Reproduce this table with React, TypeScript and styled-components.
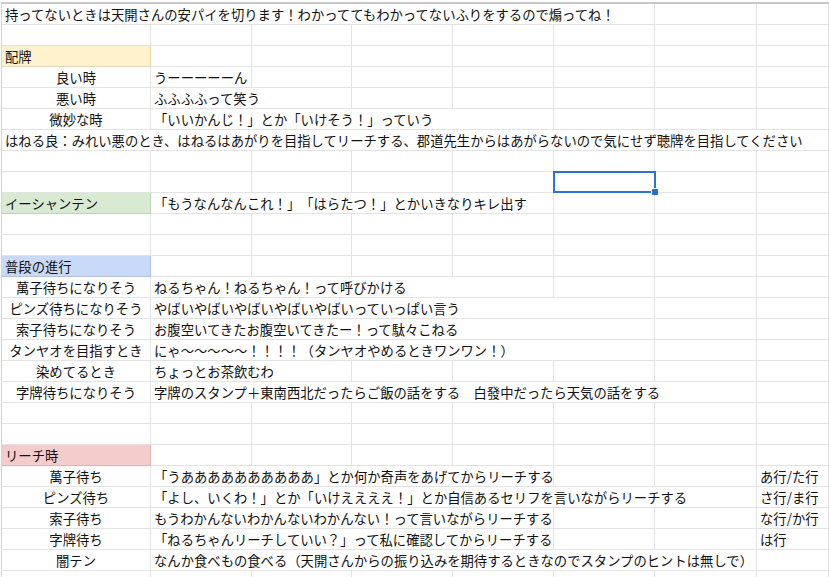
import React from "react";
import styled, { createGlobalStyle } from "styled-components";

type CellData = {
  text?: string;
  span?: number;
  center?: boolean;
  fill?: string;
  selected?: boolean;
};

const COLS = 8;
const YELLOW = "#fff2cc";
const GREEN = "#d9ead3";
const BLUE = "#c9daf8";
const PINK = "#f4cccc";

const rows: CellData[][] = [
  [{ text: "持ってないときは天開さんの安パイを切ります！わかっててもわかってないふりをするので煽ってね！", span: 6 }],
  [],
  [{ text: "配牌", fill: YELLOW }],
  [{ text: "良い時", center: true }, { text: "うーーーーーん" }],
  [{ text: "悪い時", center: true }, { text: "ふふふふって笑う", span: 2 }],
  [{ text: "微妙な時", center: true }, { text: "「いいかんじ！」とか「いけそう！」っていう", span: 4 }],
  [{ text: "はねる良：みれい悪のとき、はねるはあがりを目指してリーチする、郡道先生からはあがらないので気にせず聴牌を目指してください", span: 8 }],
  [],
  [{}, {}, {}, {}, {}, { selected: true }],
  [{ text: "イーシャンテン", fill: GREEN }, { text: "「もうなんなんこれ！」「はらたつ！」とかいきなりキレ出す", span: 4 }],
  [],
  [],
  [{ text: "普段の進行", fill: BLUE }],
  [{ text: "萬子待ちになりそう", center: true }, { text: "ねるちゃん！ねるちゃん！って呼びかける", span: 4 }],
  [{ text: "ピンズ待ちになりそう", center: true }, { text: "やばいやばいやばいやばいやばいっていっぱい言う", span: 5 }],
  [{ text: "索子待ちになりそう", center: true }, { text: "お腹空いてきたお腹空いてきたー！って駄々こねる", span: 5 }],
  [{ text: "タンヤオを目指すとき", center: true }, { text: "にゃ～～～～～！！！！（タンヤオやめるときワンワン！）", span: 5 }],
  [{ text: "染めてるとき", center: true }, { text: "ちょっとお茶飲むわ", span: 2 }],
  [{ text: "字牌待ちになりそう", center: true }, { text: "字牌のスタンプ＋東南西北だったらご飯の話をする　白發中だったら天気の話をする", span: 6 }],
  [],
  [],
  [{ text: "リーチ時", fill: PINK }],
  [{ text: "萬子待ち", center: true }, { text: "「うああああああああああ」とか何か奇声をあげてからリーチする", span: 4 }, {}, {}, { text: "あ行/た行" }],
  [{ text: "ピンズ待ち", center: true }, { text: "「よし、いくわ！」とか「いけええええ！」とか自信あるセリフを言いながらリーチする", span: 6 }, { text: "さ行/ま行" }],
  [{ text: "索子待ち", center: true }, { text: "もうわかんないわかんないわかんない！って言いながらリーチする", span: 4 }, {}, {}, { text: "な行/か行" }],
  [{ text: "字牌待ち", center: true }, { text: "「ねるちゃんリーチしていい？」って私に確認してからリーチする", span: 4 }, {}, {}, { text: "は行" }],
  [{ text: "闇テン", center: true }, { text: "なんか食べもの食べる（天開さんからの振り込みを期待するときなのでスタンプのヒントは無しで）", span: 6 }],
  [],
];

// pad every row out to the full column count
const fillRow = (cells: CellData[]): CellData[] => {
  const used = cells.reduce((n, c) => n + (c.span ?? 1), 0);
  const rest = Array.from({ length: Math.max(0, COLS - used) }, () => ({}));
  return [...cells, ...rest];
};

export default function App() {
  return (
    <>
      <GlobalStyle />
      <Sheet>
        {rows.map((row, r) => (
          <Row key={r}>
            {fillRow(row).map((cell, c) => (
              <Cell key={c} $span={cell.span ?? 1} $center={cell.center} $fill={cell.fill}>
                {cell.text}
                {cell.selected && (
                  <Selection>
                    <Handle />
                  </Selection>
                )}
              </Cell>
            ))}
          </Row>
        ))}
      </Sheet>
    </>
  );
}

const GlobalStyle = createGlobalStyle`
  html, body {
    margin: 0;
    padding: 0;
    background: #fff;
    overflow: hidden;
  }
  body {
    font-family: "Noto Sans CJK JP", "Noto Sans", sans-serif;
    color: #111;
    text-spacing-trim: space-all;
  }
`;

const Sheet = styled.div`
  display: flex;
  flex-direction: column;
  margin: 2px 0 0 1px;
  border-top: 2px solid #c8c8c8;
  border-left: 1px solid #d4d4d4;
  height: 600px;
  overflow: hidden;
`;

const Row = styled.div`
  display: grid;
  grid-template-columns: 149px 101px 100px 101px 101px 101px 102px 1fr;
  height: 21px;
  flex-shrink: 0;
`;

const Cell = styled.div<{ $span: number; $center?: boolean; $fill?: string }>`
  grid-column: span ${(p) => p.$span};
  position: relative;
  box-sizing: border-box;
  height: 21px;
  padding: 2px 3px 0 3px;
  border-right: 1px solid rgba(0, 0, 0, 0.11);
  border-bottom: 1px solid rgba(0, 0, 0, 0.11);
  background: ${(p) => p.$fill ?? "transparent"};
  text-align: ${(p) => (p.$center ? "center" : "left")};
  font-size: 13.33px;
  line-height: 18px;
  white-space: nowrap;
  overflow: visible;
`;

const Selection = styled.div`
  position: absolute;
  top: -1px;
  left: -1px;
  right: -2px;
  bottom: -1px;
  border: 2px solid #2b72d6;
  pointer-events: none;
`;

const Handle = styled.div`
  position: absolute;
  right: -5px;
  bottom: -5px;
  width: 6px;
  height: 6px;
  background: #2b72d6;
  border: 1px solid #fff;
`;
